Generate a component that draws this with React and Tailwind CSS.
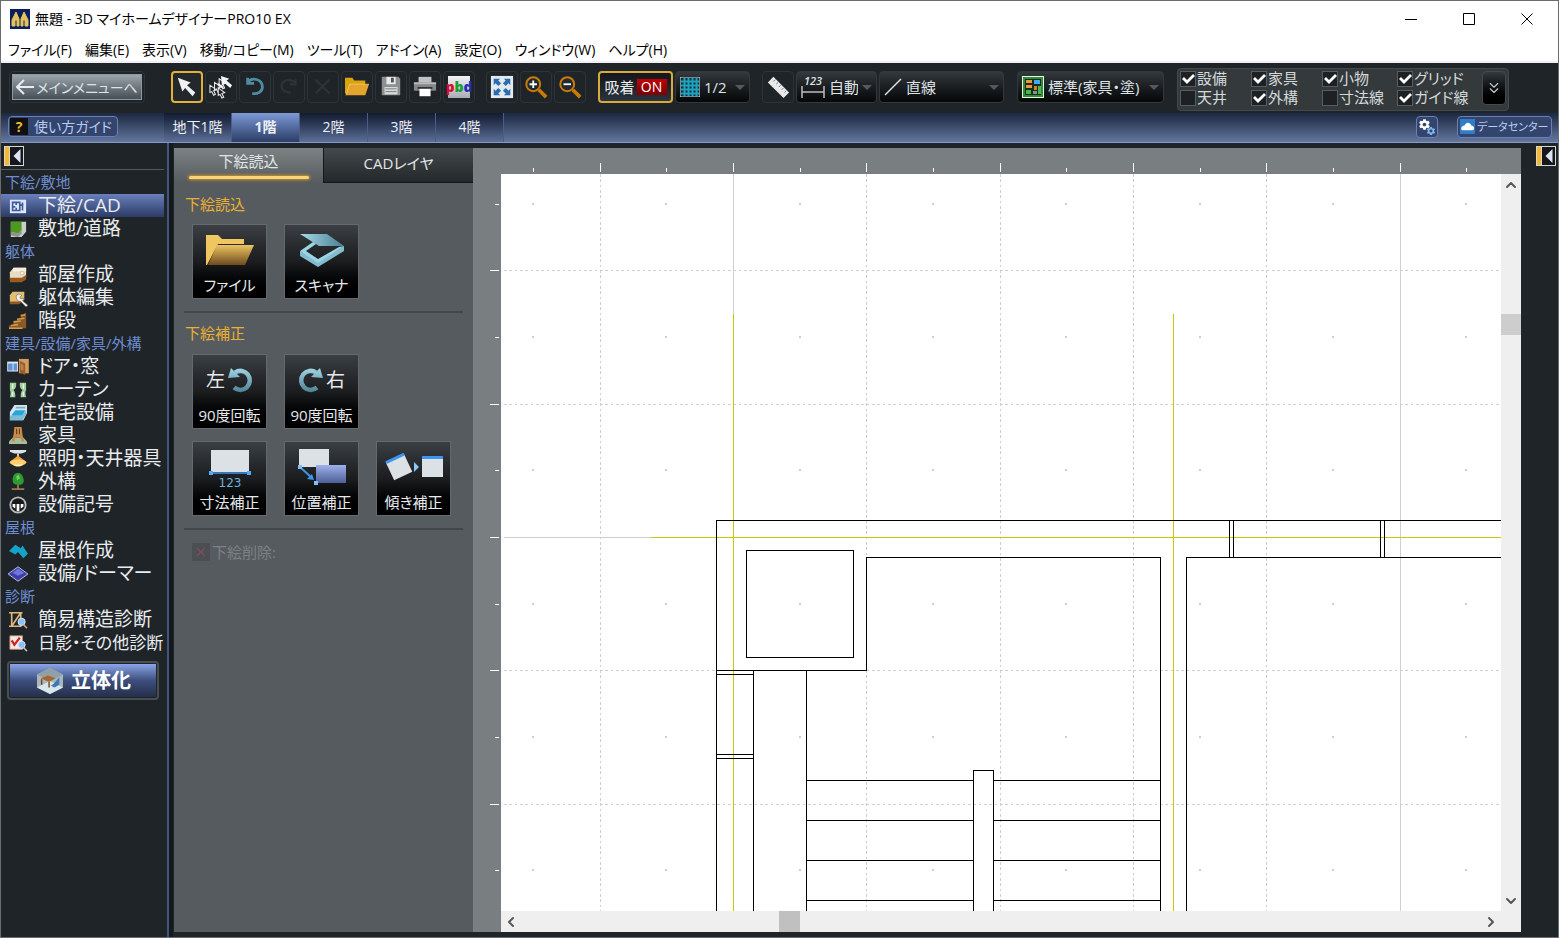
import { useState } from 'react';
import { X, ChevronUp, ChevronDown, ChevronLeft, ChevronRight, ChevronsDown } from 'lucide-react';
import { IoMdSettings } from 'react-icons/io';

const MENUS = ['ファイル(F)', '編集(E)', '表示(V)', '移動/コピー(M)', 'ツール(T)', 'アドイン(A)', '設定(O)', 'ウィンドウ(W)', 'ヘルプ(H)'];

const FLOORS = ['地下1階', '1階', '2階', '3階', '4階'];

const CHECKS = [
  [['設備', true], ['天井', false]],
  [['家具', true], ['外構', true]],
  [['小物', true], ['寸法線', false]],
  [['グリッド', true], ['ガイド線', true]],
];

/* ---------- sidebar icons ---------- */

const SIDE_ICONS = {
  cad: <><rect x="1" y="3" width="18" height="15" fill="#dfe6f7" /><path d="M4 6h8v9H4zM8 6v3M8 12v3M12 9h4M15 6v9M4 11h3" fill="none" stroke="#3c5a9c" strokeWidth="1.800" /></>,
  land: <><path d="M2 2h17v11l-5 6H2z" fill="#c9ccc8" /><path d="M2 2h12v9l-4 4-8-2z" fill="#4b9a1e" /><path d="M2 13l8 2 4-4v4l-4 4-8-2z" fill="#8d928c" /></>,
  room: <><path d="M5 2h14v11l-4 2H1V7z" fill="#e9dcc3" /><path d="M1 13h13l5-3v5l-5 3H1z" fill="#9b5a20" /><path d="M5 2h14v4H4z" fill="#f6efdf" /><path d="M12 6h5v4h-5z" fill="#cfbd9c" /><path d="M13 7h3v2h-3z" fill="#fff" /></>,
  edit: <><path d="M4 3h13v9l-4 3H1V7z" fill="#e2bd72" /><path d="M1 14h10l3-2v3l-3 2H1z" fill="#945621" /><path d="M8 8a3.500 3.500 0 0 1 6-1l-2 2 1 2 3-1a4 4 0 0 1-1 3l6 5-2 2-6-6c-3 0-5-2-5-6z" fill="#f0f0f0" stroke="#555" strokeWidth=".6" /></>,
  stairs: <><path d="M19 1v17H0v-3h5v-4h4V8h4V4h4V1z" fill="#8a5a26" /><path d="M2 15l8-1M5 11l8-1M9 8l8-1M13 4l5-1M0 18h15" stroke="#d69a4b" strokeWidth="1.800" /></>,
  door: <><rect x="-2" y="4" width="12" height="11" fill="#dfe7f2" /><path d="M-1 6h5v8h-5zM5 6h4v8H5z" fill="#5f94d6" /><path d="M11 1h11v16H11z" fill="#d29b62" /><path d="M12 3l6 3v13l-6-3z" fill="#9a5e2c" /><path d="M13 6l3 2v6l-3-1z" fill="#c48446" /></>,
  curtain: <><path d="M1 2h7c0 5 0 6-3 8 2 2 2 5 2 8H1c1-4 1-6 0-8z" fill="#9ccf9c" /><path d="M19 2h-7c0 5 0 6 3 8-2 2-2 5-2 8h6c-1-4-1-6 0-8z" fill="#9ccf9c" /><path d="M4 3v6M16 3v6M4 12v5M16 12v5" stroke="#e4f6e2" strokeWidth="1.500" /></>,
  bath: <><path d="M6 1h14v9L16 18H1V9z" fill="#cfe8f3" /><path d="M3 12l4-5h11l-3 6H3z" fill="#2ba5d8" /><path d="M1 13h13l5-6v4l-4 7H1z" fill="#7dbbd6" /><path d="M8 3h10v2H7z" fill="#86a9b8" /></>,
  chair: <><path d="M0 16l4-4h12l4 4v3H0z" fill="#a7bd9b" /><path d="M6 0h8l1 9 2 7h-3l-1-4H7l-1 4H3l2-7z" fill="#c98b4a" /><path d="M8 2h1v6H8zM11 2h1v6h-1z" fill="#4d3013" /></>,
  lamp: <><path d="M1 0h18v2l-5 2H6L1 2z" fill="#dfe2e2" /><path d="M9 4h2v4H9z" fill="#ddd" /><path d="M10 6l10 8H0z" fill="#f4a13c" /><ellipse cx="10" cy="14" rx="9" ry="3.500" fill="#ffd070" /><path d="M4 16c3 3 9 3 12 0z" fill="#fff0b0" /></>,
  tree: <><path d="M9 10h2v7h6v2H3v-2h6z" fill="#9c7a4c" /><path d="M10 0c4 0 5 3 6 6s0 7-4 7-8 0-8-5 2-8 6-8z" fill="#2f9a2f" /><path d="M8 4l3-2 1 4-3 2z" fill="#6bd05c" /></>,
  outlet: <><circle cx="10" cy="10" r="9.500" fill="#b9bcbe" /><circle cx="10" cy="10" r="7.500" fill="#17191b" /><path d="M4 9h3v5l-3-2zM8.500 9h3v8h-3zM13 9h3v3l-3 2z" fill="#fff" /></>,
  roof: <path d="M0 10l7-7 6 4 2-3 6 9-5 5-6-7-3 3z" fill="#14a3c4" />,
  dormer: <><path d="M10 2l11 8-11 8-11-8z" fill="#3c3ea8" stroke="#c8ccf6" /><path d="M10 4l7 5-7 3-6-3z" fill="#6f74d8" /></>,
  struct: <><path d="M0 2h15M0 17h14M3 2v15M13 2v15M13 2L3 17" fill="none" stroke="#e2b77c" strokeWidth="1.800" /><circle cx="14" cy="12" r="4" fill="#8cc0f2" stroke="#dfeefd" /><path d="M16 15l4 4" stroke="#cda377" strokeWidth="1.800" /></>,
  check: <><path d="M1 2h14v15H1z" fill="#f1ebe6" stroke="#c28a63" /><path d="M3 7l3 5 6-8" fill="none" stroke="#cf2222" strokeWidth="2.500" /><circle cx="14" cy="12" r="4" fill="#8cc0f2" stroke="#dfeefd" /><path d="M16 15l4 4" stroke="#b9bcc4" strokeWidth="1.800" /></>,
};

const SIDEBAR = [
  { title: '下絵/敷地', items: [['cad', '下絵/CAD'], ['land', '敷地/道路']] },
  { title: '躯体', items: [['room', '部屋作成'], ['edit', '躯体編集'], ['stairs', '階段']] },
  { title: '建具/設備/家具/外構', items: [['door', 'ドア・窓'], ['curtain', 'カーテン'], ['bath', '住宅設備'], ['chair', '家具'], ['lamp', '照明・天井器具'], ['tree', '外構'], ['outlet', '設備記号']] },
  { title: '屋根', items: [['roof', '屋根作成'], ['dormer', '設備/ドーマー']] },
  { title: '診断', items: [['struct', '簡易構造診断'], ['check', '日影・その他診断']] },
];

/* ---------- toolbar ---------- */

const Arrow = ({ x, y, fill = '#1f2428' }) => <path transform={`translate(${x} ${y})`} d="M0 0v8l2-1 2 4 2-1-2-4 3-1z" fill={fill} stroke="#ececec" strokeWidth="1.100" />;

const TOOLS = [
  { label: '選択', active: true, icon: <path d="M3 3l14 5-4 3 9 8-3 4-8-9-3 4z" fill="#f1f1f1" /> },
  { label: '複数選択', icon: <><Arrow x={1} y={11} /><Arrow x={6} y={8} /><Arrow x={10} y={14} /><Arrow x={11} y={4} /><path d="M13 1l9 3-3 2 6 5-2 3-6-5-3 3zM9 8l7 5-1 2-5-4z" fill="#f4f4f4" /></> },
  { label: '元に戻す', icon: <path d="M5 3v6h7M5 8c4-6 16-4 16 5 0 5-5 8-11 7" fill="none" stroke="#4e8ca6" strokeWidth="3" /> },
  { label: 'やり直し', disabled: true, icon: <path d="M20 4v6h-6M20 9c-4-6-15-4-15 3 0 5 4 7 10 7" fill="none" stroke="#2d3236" strokeWidth="2.500" /> },
  { label: '削除', disabled: true, icon: <path d="M5 5l15 15M20 5L5 20" stroke="#2d3236" strokeWidth="2.500" /> },
  { label: '開く', icon: <><path d="M0 3h8l2 3h12v14H0z" fill="#d9a40c" /><path d="M5 10h21l-4 12H1z" fill="#e5a52c" /><path d="M1 22L5 10h21" fill="none" stroke="#f8d070" strokeWidth=".8" /></> },
  { label: '保存', icon: <><path d="M3 2h18l2 2v18H3z" fill="#8d9092" /><path d="M8 2h10v8H8z" fill="#e8e8e8" /><path d="M13 3h3v5h-3z" fill="#4e5052" /><path d="M6 13h14v8H6z" fill="#d7d9da" /><path d="M7 15h12M7 18h12" stroke="#777" /></> },
  { label: '印刷', icon: <><path d="M6 2h14v7H6z" fill="#bfc2c4" /><path d="M1 8h24v9H1z" fill="#84888b" /><path d="M1 8h24v2H1z" fill="#bbb" /><path d="M5 13h16v2H5z" fill="#303335" /><path d="M7 15h12v8H7z" fill="#fff" /></> },
  { label: 'pbd', pbd: true },
];

const VIEW_TOOLS = [
  { label: '全体表示', icon: <><path d="M1 1h24v24H1z" fill="#e3e9f0" /><path d="M4 4h7L9 6l3 3-3 3-3-3-2 2zM22 4h-7l2 2-3 3 3 3 3-3 2 2zM4 22h7l-2-2 3-3-3-3-3 3-2-2zM22 22h-7l2-2-3-3 3-3 3 3 2-2z" fill="#2a6cb0" /></> },
  { label: '拡大', icon: <><circle cx="10" cy="10" r="7.500" fill="#24292d" stroke="#c87a0a" strokeWidth="2.200" /><path d="M16 16l8 8" stroke="#c87a0a" strokeWidth="4" /><path d="M6 10h8M10 6v8" stroke="#fff" strokeWidth="2" /></> },
  { label: '縮小', icon: <><circle cx="10" cy="10" r="7.500" fill="#24292d" stroke="#c87a0a" strokeWidth="2.200" /><path d="M16 16l8 8" stroke="#c87a0a" strokeWidth="4" /><path d="M6 10h8" stroke="#fff" strokeWidth="2" /></> },
];

const RULER_TOOL = { label: '計測', icon: <><path d="M8 2l17 17-6 6L2 8z" fill="#e9e9e9" /><path d="M10 5l-2 2M13 8l-2 2M16 11l-2 2M19 14l-2 2M22 17l-2 2" stroke="#777" /></> };

function ToolButton({ tool }) {
  return (
    <button
      aria-label={tool.label}
      disabled={tool.disabled}
      className={`size-8 shrink-0 rounded-sm border flex items-center justify-center ${tool.active ? 'border-2 border-[#e3b03a] bg-[#23282d]' : 'border-[#2e3338]'}`}
    >
      {tool.pbd ? (
        <span className="size-[22px] bg-linear-to-b from-[#f4f4f6] to-[#a9acb4] flex items-center justify-center text-[14px] leading-none font-extrabold">
          <span className="text-[#d01030]">p</span><span className="text-[#18a030]">b</span><span className="text-[#2030b0]">d</span>
        </span>
      ) : (
        <svg viewBox="0 0 26 26" className="size-6 overflow-visible">{tool.icon}</svg>
      )}
    </button>
  );
}

function ToolSelect({ label, options, icon, className }) {
  return (
    <label className={`h-8 shrink-0 rounded-sm border border-[#33383c] bg-linear-to-b from-[#34393d] to-[#060708] flex items-center gap-1 px-1 ${className}`}>
      {icon}
      <select aria-label={label} className="flex-1 min-w-0 appearance-none bg-transparent text-[15px] leading-5 text-[#dfe3e6] outline-none">
        {options.map(o => <option key={o}>{o}</option>)}
      </select>
      <svg viewBox="0 0 10 5" className="w-[10px] h-[5px] shrink-0 pointer-events-none"><path d="M0 0h10L5 5z" fill="#54595d" /></svg>
    </label>
  );
}

function CheckItem({ label, defaultChecked }) {
  return (
    <label className="flex items-center gap-px h-[19px] text-[15px] leading-none text-[#d5d9db] whitespace-nowrap">
      <span className="grid size-4 shrink-0">
        <input type="checkbox" defaultChecked={defaultChecked} className="peer col-start-1 row-start-1 appearance-none size-4 bg-[#1d2124] border border-[#575c60]" />
        <svg viewBox="0 0 16 16" className="col-start-1 row-start-1 size-4 pointer-events-none hidden peer-checked:block"><path d="M3 7l4 4 7-7" fill="none" stroke="#fff" strokeWidth="2.800" /></svg>
      </span>
      {label}
    </label>
  );
}

function CollapseButton({ label }) {
  return (
    <button aria-label={label} className="size-5 border border-[#d5d7da] bg-[#14181b] flex items-stretch">
      <span className="w-[5px] bg-[#f5b92a] border-r border-[#d5d7da]" />
      <svg viewBox="0 0 12 18" className="flex-1 h-full"><path d="M10 2v14L3 9z" fill="#dfe3f6" /></svg>
    </button>
  );
}

/* ---------- tool panel ---------- */

function Card({ label, children }) {
  return (
    <button className="size-[75px] shrink-0 border border-[#64696d] bg-linear-to-b from-[#3b3f43] via-[#1b1d1f] to-black flex flex-col items-center justify-end pb-[3px] text-[15px] leading-5 text-[#e6eaec] whitespace-nowrap">
      <span className="flex-1 flex items-center justify-center gap-0.5 text-[19px]">{children}</span>
      <span>{label}</span>
    </button>
  );
}

function RotateIcon({ flip }) {
  return (
    <svg viewBox="0 0 26 26" className={`size-[26px] ${flip ? '-scale-x-100' : ''}`}>
      <defs><linearGradient id="rot" gradientUnits="userSpaceOnUse" x1="0" y1="0" x2="0" y2="26"><stop stopColor="#a5d8e8" /><stop offset="1" stopColor="#4b7f92" /></linearGradient></defs>
      <path d="M8 5.500a9.500 9.500 0 1 1-1 15" fill="none" stroke="url(#rot)" strokeWidth="4.500" />
      <path d="M4 1L1 11l12-1z" fill="url(#rot)" />
    </svg>
  );
}

function SectionTitle({ children }) {
  return <h2 className="h-6 text-[15px] leading-6 text-[#e9b035] pl-px">{children}</h2>;
}

function Separator() {
  return <hr className="border-0 border-t-2 border-[#43474a]" />;
}

function ToolPanel() {
  return (
    <section className="w-[300px] shrink-0 bg-[#565b5f] border-r border-[#7c8184]">
      <div role="tablist" className="flex h-[35px] text-[15px] text-[#e2e5e7]">
        <button role="tab" aria-selected="true" className="flex-1 bg-linear-to-b from-[#7d8284] to-[#565b5f] flex flex-col items-center justify-between pt-[3px] pb-1">
          <span className="leading-5">下絵読込</span>
          <span className="w-[120px] h-[3px] rounded-full bg-[#f6d478] shadow-[0_0_3px_1px_#c8912a]" />
        </button>
        <button role="tab" aria-selected="false" className="flex-1 bg-linear-to-b from-[#43494c] to-[#24282b] border-l border-b border-[#15181a] pt-[3px] pb-2 leading-5">CADレイヤ</button>
      </div>
      <div className="px-[10px] pt-[9px]">
        <SectionTitle>下絵読込</SectionTitle>
        <div className="flex gap-[17px] pl-2 pt-2 pb-3">
          <Card label="ファイル">
            <svg viewBox="0 0 48 32" className="w-12 h-8">
              <defs><linearGradient id="fold" x1="0" y1="0" x2="0" y2="1"><stop stopColor="#edc561" /><stop offset="1" stopColor="#6d4a20" /></linearGradient></defs>
              <path d="M0 1h12l4 4h22v5H12L1 31H0z" fill="#efc65f" /><path d="M11 11h37l-9 20H2z" fill="url(#fold)" />
            </svg>
          </Card>
          <Card label="スキャナ">
            <svg viewBox="0 0 44 34" className="w-11 h-[34px]">
              <defs><linearGradient id="scan" x1="0" y1="0" x2="1" y2="0"><stop stopColor="#a4dbe9" /><stop offset="1" stopColor="#4a7d8f" /></linearGradient></defs>
              <path d="M0 1h27l17 12H19z" fill="url(#scan)" /><path d="M0 18v5l18 11 26-16v-5L18 28z" fill="#83bccd" /><path d="M0 18l13-9 3 2-10 7 12 8 21-12 5-1-26 17z" fill="#9bd4e4" />
            </svg>
          </Card>
        </div>
        <Separator />
        <div className="pt-2"><SectionTitle>下絵補正</SectionTitle></div>
        <div className="flex gap-[17px] pl-2 pt-[9px]">
          <Card label="90度回転">左<RotateIcon /></Card>
          <Card label="90度回転"><RotateIcon flip />右</Card>
        </div>
        <div className="flex gap-[17px] pl-2 pt-3 pb-3">
          <Card label="寸法補正">
            <svg viewBox="0 0 42 42" className="size-[42px] mt-2 overflow-visible">
              <path d="M2 0h38v22H2z" fill="#dce1e5" /><path d="M1 23h40" stroke="#3d95f0" strokeWidth="1.500" /><path d="M0 21h4v4H0zM38 21h4v4h-4z" fill="#58a9f5" />
              <text x="21" y="37" textAnchor="middle" fontSize="12" fill="#6fb0dd" fontFamily="DejaVu Sans">123</text>
            </svg>
          </Card>
          <Card label="位置補正">
            <svg viewBox="0 0 48 36" className="w-12 h-9">
              <defs><linearGradient id="pos" x1="0" y1="0" x2="0" y2="1"><stop stopColor="#9db1ea" /><stop offset="1" stopColor="#4c5f96" /></linearGradient></defs>
              <path d="M1 0h30v18H1z" fill="#dce1e5" /><path d="M18 16h30v18H18z" fill="url(#pos)" />
              <path d="M2 18l12 11" stroke="#3d95f0" strokeWidth="2" /><path d="M16 31l-7-1 5-5z" fill="#3d95f0" /><path d="M0 16h4v4H0zM16 32h4v4h-4z" fill="#7fc0fa" />
            </svg>
          </Card>
          <Card label="傾き補正">
            <svg viewBox="0 0 58 28" className="w-[58px] h-7">
              <g transform="rotate(-25 14 14)"><path d="M4 4h20v20H4z" fill="#dce1e5" /><path d="M4 3h20v3H4z" fill="#3d95f0" /></g>
              <path d="M29 9l5 5-5 5z" fill="#8cc6f7" /><path d="M37 4h21v20H37z" fill="#dce1e5" /><path d="M37 3h21v3H37z" fill="#3d95f0" />
            </svg>
          </Card>
        </div>
        <Separator />
        <button disabled className="mt-[10px] ml-2 flex items-center gap-0.5 text-[15px] leading-6 text-[#7c8184]">
          <span className="size-[18px] bg-[#4b4f52] flex items-center justify-center"><X size={14} strokeWidth={3} className="text-[#7c4c57]" /></span>
          下絵削除:
        </button>
      </div>
    </section>
  );
}

/* ---------- drawing area ---------- */

const PITCH = 400 / 3;
const steps = Array.from({ length: 20 }, (_, i) => i);
const major = (offset, i) => Math.floor(offset + i * PITCH);

// wall, column, window and stair outlines: [x1, y1, x2, y2]
const WALLS = [
  [215, 346, 215, 2000], [215, 346, 3000, 346],
  [365, 383, 659, 383], [365, 383, 365, 496], [215, 496, 365, 496],
  [215, 500, 252, 500], [215, 580, 252, 580], [215, 584, 252, 584],
  [252, 496, 252, 2000], [305, 496, 305, 2000], [659, 383, 659, 2000],
  [685, 383, 685, 2000], [685, 383, 3000, 383],
  [728, 346, 728, 383], [732, 346, 732, 383], [879, 346, 879, 383], [883, 346, 883, 383],
  [472, 596, 492, 596], [472, 596, 472, 2000], [492, 596, 492, 2000],
  ...[606, 646, 686, 726].flatMap(y => [[305, y, 472, y], [492, y, 659, y]]),
];

function Drawing() {
  return (
    <svg className="size-full bg-white" shapeRendering="crispEdges">
      <g stroke="#cfcfcf">
        {steps.map(i => {
          const x = major(99, i) + 0.5;
          const y = major(96.7, i) + 0.5;
          return (
            <g key={i}>
              <line x1={x} y1="0" x2={x} y2="100%" strokeDasharray={i % 5 === 1 ? undefined : '3 2 3 3 2 3'} />
              <line x1="3" y1={y} x2="100%" y2={y} strokeDasharray={i % 5 === 2 ? undefined : '3 2 3 3 2 3'} />
            </g>
          );
        })}
      </g>
      <g fill="#cfcfcf">
        {steps.map(i => steps.map(j => (
          <rect key={`${i}-${j}`} x={Math.round(31 + i * PITCH)} y={Math.floor(29 + j * PITCH)} width="2" height="2" />
        )))}
      </g>
      <path d="M232.5 139.500V2000M672.5 139.500V2000M150 363.500H3000" stroke="#c8c80a" />
      <g stroke="#000" fill="none">
        <rect x="245.5" y="376.5" width="107" height="107" />
        {WALLS.map(([x1, y1, x2, y2]) => (
          <path key={`${x1},${y1},${x2},${y2}`} d={`M${x1 + 0.5} ${y1 + 0.5}L${x2 + 0.5} ${y2 + 0.5}`} strokeLinecap="square" />
        ))}
      </g>
    </svg>
  );
}

function Canvas() {
  return (
    <main className="flex-1 min-w-0 bg-[#797e81] grid grid-cols-[27px_minmax(0,1fr)_20px] grid-rows-[26px_minmax(0,1fr)_21px]">
      <svg className="col-start-2 col-span-2 size-full" shapeRendering="crispEdges">
        {steps.map(i => (
          <g key={i} fill="#fff">
            <rect x={major(99, i)} y="15" width="1" height="9" />
            <rect x={Math.round(32 + i * PITCH)} y="20" width="1" height="4" />
          </g>
        ))}
      </svg>
      <svg className="row-start-2 size-full" shapeRendering="crispEdges">
        {steps.map(i => (
          <g key={i} fill="#fff">
            <rect x="16" y={major(96.7, i)} width="9" height="1" />
            <rect x="21" y={Math.floor(30 + i * PITCH)} width="4" height="1" />
          </g>
        ))}
      </svg>
      <div className="row-start-2 col-start-2 min-h-0 overflow-hidden"><Drawing /></div>
      <div className="row-start-2 col-start-3 bg-[#efefef] flex flex-col items-center text-[#55585a]">
        <button aria-label="上へ" className="h-[21px]"><ChevronUp size={16} strokeWidth={3} /></button>
        <div className="flex-1 w-full pt-[119px]"><div className="w-full h-[21px] bg-[#cdcdcd]" /></div>
        <button aria-label="下へ" className="h-[21px]"><ChevronDown size={16} strokeWidth={3} /></button>
      </div>
      <div className="row-start-3 col-start-2 bg-[#efefef] flex items-center text-[#55585a]">
        <button aria-label="左へ" className="w-5 flex justify-center"><ChevronLeft size={16} strokeWidth={3} /></button>
        <div className="flex-1 h-full pl-[258px]"><div className="w-[21px] h-full bg-[#c0c0c0]" /></div>
        <button aria-label="右へ" className="w-5 flex justify-center"><ChevronRight size={16} strokeWidth={3} /></button>
      </div>
      <div className="row-start-3 col-start-3 bg-[#efefef]" />
    </main>
  );
}

/* ---------- window frame ---------- */

const WINDOW_BUTTONS = [
  ['最小化', 'M0 6.500h12'],
  ['最大化', 'M.5.5h11v11H.5z'],
  ['閉じる', 'M.5.5l11 11M11.5.5l-11 11'],
];

export default function App() {
  const [floor, setFloor] = useState('1階');
  const [item, setItem] = useState('cad');

  return (
    <div className="h-screen flex flex-col border border-[#6c6c6e] bg-[#1f2428] overflow-hidden font-['Open_Sans','Noto_Sans_CJK_JP',sans-serif] [font-feature-settings:'palt']">
      {/* Title bar */}
      <header className="h-9 shrink-0 bg-white flex items-center pl-[9px] pr-0.5">
        <svg viewBox="0 0 20 20" className="size-5 mr-[5px]"><path d="M0 0h20v20H0z" fill="#0b1f5c" /><path d="M2 17V11l3-6 1-2 3 7V17H7v-5l-1-3-1 3v5zM11 17v-7l3-7 1 2 3 6v6h-3v-5l-1-3-1 3v5z" fill="#e6c35a" stroke="#e6c35a" /></svg>
        <h1 className="flex-1 text-[14px] leading-5 text-black font-normal">無題 - 3D マイホームデザイナーPRO10 EX</h1>
        {WINDOW_BUTTONS.map(([label, d]) => (
          <button key={label} aria-label={label} className="w-[58px] h-full flex items-center justify-center">
            <svg viewBox="0 0 12 12" className="size-3"><path d={d} fill="none" stroke="#000" /></svg>
          </button>
        ))}
      </header>
      <nav className="h-[26px] shrink-0 bg-white border-b-2 border-[#f0f0f4] flex items-center gap-[13px] pl-[7px] pt-0.5 text-[14px] leading-5 text-black whitespace-nowrap">
        {MENUS.map(m => <button key={m}>{m}</button>)}
      </nav>

      {/* Toolbar */}
      <div className="h-[50px] shrink-0 flex items-center pl-2 pb-0.5 whitespace-nowrap">
        <button className="w-[136px] h-8 shrink-0 rounded-sm border border-[#2e3338] p-0.5 mr-[26px]">
          <span className="h-full flex items-center justify-center gap-0.5 border border-[#8f989e] bg-linear-to-b from-[#9ba5ac] to-[#474f57] text-[14px] text-[#dde3e6]">
            <svg viewBox="0 0 18 16" className="w-[18px] h-4"><path d="M18 8H2M8 1L1 8l7 7" fill="none" stroke="#e6ecef" strokeWidth="2" /></svg>
            メインメニューへ
          </span>
        </button>
        <div className="flex gap-0.5 mr-[11px]">{TOOLS.map(t => <ToolButton key={t.label} tool={t} />)}</div>
        <div className="flex gap-0.5 mr-3">{VIEW_TOOLS.map(t => <ToolButton key={t.label} tool={t} />)}</div>
        <button className="w-[75px] h-8 shrink-0 rounded-sm border-2 border-[#d9a93a] bg-linear-to-b from-[#14171c] to-[#2c333d] flex items-center justify-center gap-0.5 text-[15px] text-[#e8ecee] mr-0.5">
          吸着<span className="bg-linear-to-b from-[#c40000] to-[#7a0000] h-4 w-[30px] text-[14px] leading-4 text-white text-center">ON</span>
        </button>
        <ToolSelect
          label="グリッド間隔"
          options={['1/2', '1/4', '1/1']}
          className="w-[75px] mr-[12px]"
          icon={<svg viewBox="0 0 20 20" className="size-5 shrink-0"><path d="M0 0h20v20H0z" fill="#0e2f3a" stroke="#dfe6e8" /><path d="M4.500 1v18M8.500 1v18M12.500 1v18M16.500 1v18M1 4.500h18M1 8.500h18M1 12.500h18M1 16.500h18" stroke="#1fa3bf" strokeWidth="2" /></svg>}
        />
        <div className="mr-0.5"><ToolButton tool={RULER_TOOL} /></div>
        <ToolSelect
          label="寸法"
          options={['自動', '手動']}
          className="w-[81px] mr-0.5"
          icon={<svg viewBox="0 0 24 28" className="w-6 h-7 shrink-0 overflow-visible"><text x="12" y="12" textAnchor="middle" fontSize="11" fontStyle="italic" fontWeight="600" fill="#dfe3e6">123</text><path d="M1 13v12M23 13v12M1 19h22" stroke="#b9bdc0" strokeWidth="1.500" /></svg>}
        />
        <ToolSelect
          label="線種"
          options={['直線', '円弧']}
          className="w-[125px] mr-[13px]"
          icon={<svg viewBox="0 0 18 18" className="size-[18px] shrink-0"><path d="M1 17L17 1" stroke="#dfe3e6" strokeWidth="1.500" /></svg>}
        />
        <ToolSelect
          label="表示設定"
          options={['標準(家具・塗)', '線画']}
          className="w-[147px] mr-[13px]"
          icon={<svg viewBox="0 0 22 22" className="size-[22px] shrink-0"><path d="M0 0h22v22H0z" fill="#e6f6dc" /><path d="M1 1h20v20H1z" fill="#2f8a3a" /><path d="M3 3h16v16H3z" fill="#14301c" /><path d="M4 4h6v3H4zM4 9h6v3H4z" fill="#f0953a" /><path d="M12 4h6v4h-6z" fill="#4aa5ee" /><path d="M12 10h3v4h-3z" fill="#e07a2a" /><path d="M4 14h5v4H4zM16 10h3v8h-3z" fill="#48b84a" /><path d="M11 15h4v3h-4z" fill="#8a8f92" /></svg>}
        />
        <div className="h-[43px] mt-1 shrink-0 rounded-sm border border-[#45494d] bg-[#34393c] flex items-center pl-0.5 pr-0.5 pb-0.5">
          {CHECKS.map((col, i) => (
            <div key={i} className={i < 2 ? 'w-[71px]' : i === 2 ? 'w-[75px]' : 'w-[85px]'}>
              {col.map(([label, on]) => <CheckItem key={label} label={label} defaultChecked={on} />)}
            </div>
          ))}
          <button aria-label="その他" className="w-6 h-[34px] rounded-sm border border-[#45494d] bg-linear-to-b from-[#34393d] to-black flex items-center justify-center text-[#c5c9cb]"><ChevronsDown size={18} strokeWidth={1.5} /></button>
        </div>
      </div>

      {/* Floor bar */}
      <div className="h-[30px] shrink-0 flex items-center bg-linear-to-b from-[#1d2942] to-[#64779f] border-b border-[#8699c6] pl-[7px] pr-[6px] whitespace-nowrap text-[#b9cbf2]">
        <div className="w-[156px] pb-0.5">
          <button className="w-[110px] h-[21px] rounded-sm border border-[#6a80b5] bg-[#33456d] flex items-center gap-1.5 pl-px text-[14px] leading-none">
            <span className="w-[18px] h-[17px] bg-[#0e1013] text-[#f2b92c] font-bold leading-[17px] text-center">?</span>使い方ガイド
          </button>
        </div>
        <div role="tablist" className="self-stretch flex">
          {FLOORS.map(f => (
            <button
              key={f}
              role="tab"
              aria-selected={f === floor}
              onClick={() => setFloor(f)}
              className={`w-[68px] pb-0.5 text-[14px] leading-6 text-[#eef1f6] border-r border-[#4a5d86] ${f === floor ? 'font-bold bg-linear-to-b from-[#7d9ad8] to-[#2c3e66]' : 'bg-linear-to-b from-[#121b30] to-[#5d7099]'}`}
            >
              {f}
            </button>
          ))}
        </div>
        <div className="ml-auto pb-0.5 flex items-center gap-[19px]">
          <button aria-label="設定" className="w-[22px] h-[22px] rounded-sm border border-[#6a80b5] bg-[#33456d] relative text-white">
            <IoMdSettings size={13} className="absolute left-px top-px" />
            <IoMdSettings size={10} className="absolute right-px bottom-px text-[#7fb4e8]" />
          </button>
          <button className="w-[95px] h-[22px] rounded-sm border border-[#6a80b5] bg-[#33456d] flex items-center gap-0.5 pl-0.5 text-[11px] leading-none">
            <svg viewBox="0 0 16 16" className="size-[15px] shrink-0"><path d="M0 0h16v16H0z" fill="#2f7cc8" /><path d="M2 12c-2-3 1-5 3-5 1-4 6-4 7 0 3 0 4 4 2 5z" fill="#fff" /></svg>
            データセンター
          </button>
        </div>
      </div>

      {/* Body */}
      <div className="flex-1 min-h-0 flex">
        <aside className="w-[163px] shrink-0 whitespace-nowrap">
          <div className="h-[27px] pt-[3px] pl-[3px] mb-px border-b border-[#55595c]"><CollapseButton label="メニューを閉じる" /></div>
          {SIDEBAR.map(group => (
            <div key={group.title}>
              <h2 className="h-[23px] pl-1 text-[15px] leading-[23px] text-[#6e8cd0]">{group.title}</h2>
              {group.items.map(([id, label]) => (
                <button
                  key={id}
                  onClick={() => setItem(id)}
                  className={`w-full h-[23px] flex items-center gap-[11px] pl-2 leading-[23px] text-[#e9ecee] ${label.length > 7 ? 'text-[17px]' : 'text-[19px]'} ${id === item ? 'bg-linear-to-b from-[#6a80bd] to-[#2c3c66]' : ''}`}
                >
                  <svg viewBox="0 0 20 20" className="size-[18px] shrink-0 overflow-visible">{SIDE_ICONS[id]}</svg>
                  {label}
                </button>
              ))}
            </div>
          ))}
          <button className="mt-[7px] ml-[6px] w-[152px] h-[39px] rounded-sm border-2 border-[#4a4e52] p-px">
            <span className="h-full flex items-center justify-center gap-[6px] bg-linear-to-b from-[#8ba6ea] via-[#3d4f7e] to-[#252f4a] text-[20px] font-bold text-white">
              <svg viewBox="0 0 30 28" className="w-[30px] h-[26px]"><path d="M15 0l14 7v14l-14 7-14-7V7z" fill="#a8b6bd" /><path d="M15 0l14 7-14 7L1 7z" fill="#8fa0a8" /><path d="M15 14l14 7-14 7-14-7z" fill="#dbe6ea" /><path d="M5 11l8-3 8 3-7 4z" fill="#a8662a" /><path d="M6 12v6M14 15v6" stroke="#70411a" strokeWidth="1.500" /><path d="M19 17l6-7v8l-5 3-4-2z" fill="#3a7ab5" /></svg>
              立体化
            </span>
          </button>
        </aside>
        <div className="w-[6px] shrink-0 ml-[3px] mr-px border-l-2 border-[#41557f] bg-[#15181c]" />
        <div className="flex-1 min-w-0 flex pt-[5px] pb-[5px]">
          <ToolPanel />
          <Canvas />
        </div>
        <aside className="w-[37px] shrink-0 pt-[3px] pr-0.5 flex justify-end items-start"><CollapseButton label="パネルを閉じる" /></aside>
      </div>
    </div>
  );
}
